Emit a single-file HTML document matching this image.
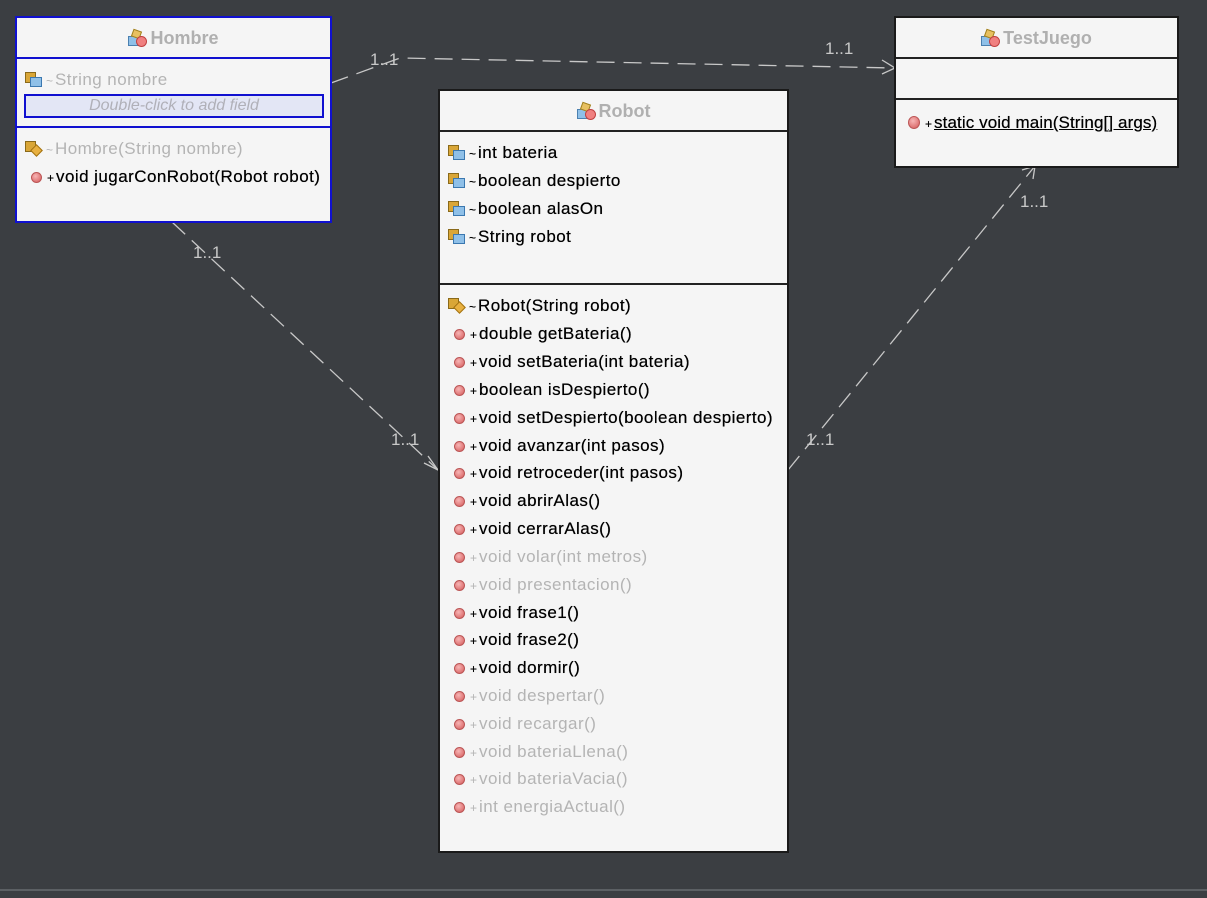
<!DOCTYPE html>
<html><head><meta charset="utf-8"><style>
*{margin:0;padding:0;box-sizing:border-box}
body{width:1207px;height:898px;background:#3b3e42;position:relative;overflow:hidden;font-family:"Liberation Sans",sans-serif}
.box{position:absolute;background:#f5f5f5;border:2px solid #1a1a1a}
.sep{position:absolute;left:0;right:0;height:2px;background:#222}
.title{position:absolute;left:0;right:0;text-align:center;font-weight:bold;font-size:18px;color:#b0b0b0}
.r{position:absolute;font-size:17px;letter-spacing:0.45px;color:#000;white-space:nowrap;height:20px;line-height:20px;text-shadow:0 0 0.4px #000}
.g{color:#b4b4b4;text-shadow:none}
.s{font-size:12px;margin-right:2px;letter-spacing:0}
.mi{display:inline-block;width:11px;height:11px;border-radius:50%;background:radial-gradient(circle at 40% 35%,#f7b5b5,#d45a5a);border:1px solid #b55;vertical-align:-1px;margin-right:5px}
.fi{display:inline-block;position:relative;width:16px;height:14px;vertical-align:-1px;margin-right:5px}
.fi:before{content:"";position:absolute;left:0;top:0;width:9px;height:9px;background:#d9a637;border:1px solid #8a6a1a}
.fi:after{content:"";position:absolute;left:5px;top:5px;width:10px;height:8px;background:#8fc0e8;border:1px solid #3b78b0}
.ci:after{left:7px;top:5px;width:7px;height:7px;background:#e8b040;border:1px solid #a07010;transform:rotate(45deg)}
.hi{display:inline-block;position:relative;width:18px;height:15px;vertical-align:-1px;margin-right:4px}
.hi:before{content:"";position:absolute;left:0;top:6px;width:12px;height:8px;background:#8fc0e8;border:1px solid #4a80b0}
.hi:after{content:"";position:absolute;left:8px;top:6px;width:9px;height:9px;border-radius:50%;background:#f08080;border:1px solid #c04040}
.hi i{position:absolute;left:4px;top:0;width:9px;height:8px;background:#e8c060;border:1px solid #a08020;transform:rotate(20deg)}
svg{position:absolute;left:0;top:0}
.lbl{position:absolute;font-size:17px;color:#c8c8c8}
</style></head><body>
<svg width="1207" height="898">
<g stroke="#c8c8c8" stroke-width="1.3" fill="none" stroke-dasharray="18,9">
<path d="M331 83 L400 58 L895 68"/>
<path d="M172 222 L438 470"/>
<path d="M788 470 L1035 166"/>
</g>
<g stroke="#c8c8c8" stroke-width="1.3" fill="none">
<path d="M882 60 L895 68 L882 74"/>
<path d="M428 456 L438 470 L424 463"/>
<path d="M1022 170 L1035 166 L1033 179"/>
</g>
<rect x="0" y="889" width="1207" height="2" fill="#5c6064"/>
<rect x="0" y="891" width="1207" height="7" fill="#3b3e42"/>
</svg>
<div class="lbl" style="left:370px;top:50px">1..1</div>
<div class="lbl" style="left:825px;top:39px">1..1</div>
<div class="lbl" style="left:193px;top:243px">1..1</div>
<div class="lbl" style="left:391px;top:430px">1..1</div>
<div class="lbl" style="left:806px;top:430px">1..1</div>
<div class="lbl" style="left:1020px;top:192px">1..1</div>

<div class="box" style="left:15px;top:16px;width:317px;height:207px;border-color:#1010d0">
<div class="title" style="top:10px"><span class="hi"><i></i></span>Hombre</div>
<div class="sep" style="top:39px;background:#1010d0"></div>
<div class="r g" style="left:8px;top:52px"><span class="fi"></span><span class="s">~</span>String nombre</div>
<div style="position:absolute;left:7px;top:76px;width:300px;height:24px;border:2px solid #1010d0;background:#e3e6f5;text-align:center;font-style:italic;font-size:16px;color:#b0b0b8;line-height:20px">Double-click to add field</div>
<div class="sep" style="top:108px;background:#1010d0"></div>
<div class="r g" style="left:8px;top:121px"><span class="fi ci"></span><span class="s">~</span>Hombre(String nombre)</div>
<div class="r" style="left:14px;top:149px"><span class="mi"></span><span class="s">+</span>void jugarConRobot(Robot robot)</div>
</div>

<div class="box" style="left:438px;top:89px;width:351px;height:764px">
<div class="title" style="top:10px"><span class="hi"><i></i></span>Robot</div>
<div class="sep" style="top:39px"></div>
<div class="r" style="left:8px;top:52px"><span class="fi"></span><span class="s">~</span>int bateria</div>
<div class="r" style="left:8px;top:80px"><span class="fi"></span><span class="s">~</span>boolean despierto</div>
<div class="r" style="left:8px;top:108px"><span class="fi"></span><span class="s">~</span>boolean alasOn</div>
<div class="r" style="left:8px;top:136px"><span class="fi"></span><span class="s">~</span>String robot</div>
<div class="sep" style="top:192px"></div>
<div class="r" style="left:8px;top:205px"><span class="fi ci"></span><span class="s">~</span>Robot(String robot)</div>
<div class="r" style="left:14px;top:233px"><span class="mi"></span><span class="s">+</span>double getBateria()</div>
<div class="r" style="left:14px;top:261px"><span class="mi"></span><span class="s">+</span>void setBateria(int bateria)</div>
<div class="r" style="left:14px;top:289px"><span class="mi"></span><span class="s">+</span>boolean isDespierto()</div>
<div class="r" style="left:14px;top:317px"><span class="mi"></span><span class="s">+</span>void setDespierto(boolean despierto)</div>
<div class="r" style="left:14px;top:345px"><span class="mi"></span><span class="s">+</span>void avanzar(int pasos)</div>
<div class="r" style="left:14px;top:372px"><span class="mi"></span><span class="s">+</span>void retroceder(int pasos)</div>
<div class="r" style="left:14px;top:400px"><span class="mi"></span><span class="s">+</span>void abrirAlas()</div>
<div class="r" style="left:14px;top:428px"><span class="mi"></span><span class="s">+</span>void cerrarAlas()</div>
<div class="r g" style="left:14px;top:456px"><span class="mi"></span><span class="s">+</span>void volar(int metros)</div>
<div class="r g" style="left:14px;top:484px"><span class="mi"></span><span class="s">+</span>void presentacion()</div>
<div class="r" style="left:14px;top:512px"><span class="mi"></span><span class="s">+</span>void frase1()</div>
<div class="r" style="left:14px;top:539px"><span class="mi"></span><span class="s">+</span>void frase2()</div>
<div class="r" style="left:14px;top:567px"><span class="mi"></span><span class="s">+</span>void dormir()</div>
<div class="r g" style="left:14px;top:595px"><span class="mi"></span><span class="s">+</span>void despertar()</div>
<div class="r g" style="left:14px;top:623px"><span class="mi"></span><span class="s">+</span>void recargar()</div>
<div class="r g" style="left:14px;top:651px"><span class="mi"></span><span class="s">+</span>void bateriaLlena()</div>
<div class="r g" style="left:14px;top:678px"><span class="mi"></span><span class="s">+</span>void bateriaVacia()</div>
<div class="r g" style="left:14px;top:706px"><span class="mi"></span><span class="s">+</span>int energiaActual()</div>
</div>

<div class="box" style="left:894px;top:16px;width:285px;height:152px">
<div class="title" style="top:10px"><span class="hi"><i></i></span>TestJuego</div>
<div class="sep" style="top:39px"></div>
<div class="sep" style="top:80px"></div>
<div class="r" style="left:12px;top:95px;letter-spacing:0.1px"><span class="mi" style="width:12px;height:13px"></span><span class="s">+</span><u>static void main(String[] args)</u></div>
</div>
</body></html>
